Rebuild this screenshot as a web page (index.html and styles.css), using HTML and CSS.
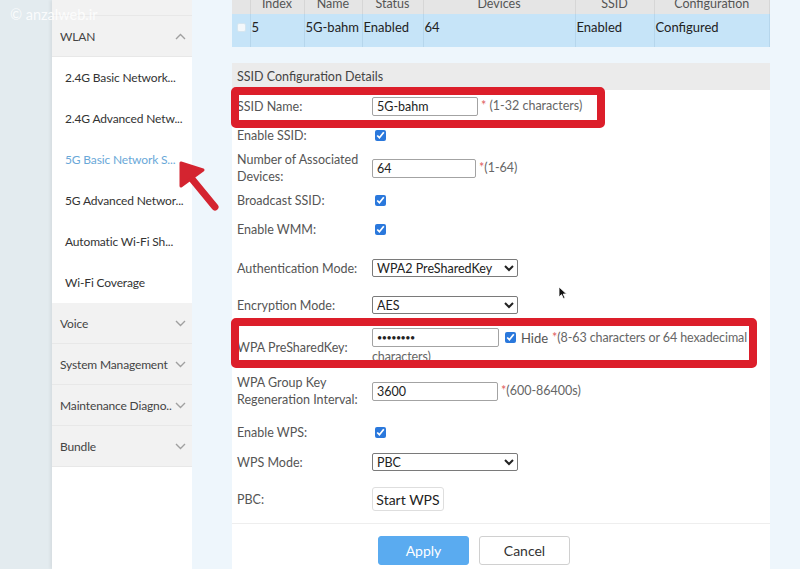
FILE: index.html
```html
<!DOCTYPE html>
<html lang="en">
  <head>
    <meta charset="UTF-8" />
    <meta name="viewport" content="width=device-width, initial-scale=1.0" />
    <title>5G Basic Network Settings</title>
    <link rel="stylesheet" href="styles.css">
  </head>
  <body>
    <div class="gutter"></div>

    <div class="sidebar">
      <ul class="menu">
        <li class="menu-head"></li>
        <li class="menu-head">
          <span>WLAN</span>
          <svg class="chevron" width="11" height="7" viewBox="0 0 11 7"><path d="M1 6 L5.5 1.5 L10 6" /></svg>
        </li>
        <li class="menu-item">2.4G Basic Network...</li>
        <li class="menu-item">2.4G Advanced Netw...</li>
        <li class="menu-item active">5G Basic Network S...</li>
        <li class="menu-item">5G Advanced Networ...</li>
        <li class="menu-item">Automatic Wi-Fi Sh...</li>
        <li class="menu-item">Wi-Fi Coverage</li>
        <li class="menu-head">
          <span>Voice</span>
          <svg class="chevron" width="11" height="7" viewBox="0 0 11 7"><path d="M1 1 L5.5 5.5 L10 1" /></svg>
        </li>
        <li class="menu-head">
          <span>System Management</span>
          <svg class="chevron" width="11" height="7" viewBox="0 0 11 7"><path d="M1 1 L5.5 5.5 L10 1" /></svg>
        </li>
        <li class="menu-head">
          <span>Maintenance Diagno..</span>
          <svg class="chevron" width="11" height="7" viewBox="0 0 11 7"><path d="M1 1 L5.5 5.5 L10 1" /></svg>
        </li>
        <li class="menu-head">
          <span>Bundle</span>
          <svg class="chevron" width="11" height="7" viewBox="0 0 11 7"><path d="M1 1 L5.5 5.5 L10 1" /></svg>
        </li>
      </ul>
    </div>

    <div class="main">
      <table class="ssid-table">
        <thead>
          <tr>
            <th class="col-check"></th>
            <th class="col-index">Index</th>
            <th class="col-name">Name</th>
            <th class="col-status">Status</th>
            <th class="col-devices">Devices</th>
            <th class="col-ssid">SSID</th>
            <th class="col-config">Configuration</th>
          </tr>
        </thead>
        <tbody>
          <tr class="selected">
            <td><span class="row-check"></span></td>
            <td>5</td>
            <td>5G-bahm</td>
            <td>Enabled</td>
            <td>64</td>
            <td>Enabled</td>
            <td>Configured</td>
          </tr>
        </tbody>
      </table>

      <div class="panel">
        <div class="panel-title">SSID Configuration Details</div>

        <div class="row h32">
          <label>SSID Name:</label>
          <div class="value">
            <input class="text w106" type="text" value="5G-bahm"><span class="hint"><span class="req">*</span> (1-32 characters)</span>
          </div>
        </div>
        <div class="row h26">
          <label>Enable SSID:</label>
          <div class="value"><input class="check" type="checkbox" checked></div>
        </div>
        <div class="row h40">
          <label>Number of Associated Devices:</label>
          <div class="value">
            <input class="text w104" type="text" value="64"><span class="hint"><span class="req">*</span>(1-64)</span>
          </div>
        </div>
        <div class="row h24">
          <label>Broadcast SSID:</label>
          <div class="value"><input class="check" type="checkbox" checked></div>
        </div>
        <div class="row h34">
          <label>Enable WMM:</label>
          <div class="value"><input class="check" type="checkbox" checked></div>
        </div>
        <div class="row h44">
          <label>Authentication Mode:</label>
          <div class="value">
            <select class="select">
              <option>WPA2 PreSharedKey</option>
            </select>
          </div>
        </div>
        <div class="row h30">
          <label>Encryption Mode:</label>
          <div class="value">
            <select class="select">
              <option>AES</option>
            </select>
          </div>
        </div>
        <div class="row h54">
          <label>WPA PreSharedKey:</label>
          <div class="value wrap">
            <input class="text w127 secret" type="password" value="12345678"><input class="check check-hide" type="checkbox" checked><span class="hide-label">Hide</span><span class="hint psk-hint"><span class="req">*</span>(8-63 characters or 64 hexadecimal characters)</span>
          </div>
        </div>
        <div class="row h34">
          <label>WPA Group Key Regeneration Interval:</label>
          <div class="value">
            <input class="text w126" type="text" value="3600"><span class="hint"><span class="req">*</span>(600-86400s)</span>
          </div>
        </div>
        <div class="row h28 gap-top">
          <label>Enable WPS:</label>
          <div class="value"><input class="check" type="checkbox" checked></div>
        </div>
        <div class="row h32">
          <label>WPS Mode:</label>
          <div class="value">
            <select class="select">
              <option>PBC</option>
            </select>
          </div>
        </div>
        <div class="row h42">
          <label>PBC:</label>
          <div class="value"><button class="btn-small">Start WPS</button></div>
        </div>

        <div class="actions">
          <button class="btn btn-primary">Apply</button>
          <button class="btn">Cancel</button>
        </div>
      </div>
    </div>

    <!-- annotations drawn on top of the screenshot -->
    <div class="watermark">© anzalweb.ir</div>
    <div class="mark mark-ssid"></div>
    <div class="mark mark-psk"></div>
    <svg class="arrow" width="56" height="62" viewBox="0 0 56 62">
      <line x1="22" y1="24" x2="45" y2="52" />
      <polygon points="11,8 11,31 33,15" />
    </svg>
    <svg class="cursor" width="10" height="14" viewBox="0 0 10 14">
      <path d="M1 1 L1 11 L3.5 8.6 L5.4 12.6 L7 11.9 L5.2 8 L8.6 8 Z" />
    </svg>
  </body>
</html>
```

FILE: styles.css
```css
* {
  box-sizing: border-box;
  margin: 0;
  padding: 0;
}

body {
  font-family: "Lato", "Open Sans", sans-serif;
  font-size: 12.5px;
  color: #444;
  background-color: #e3ebef;
  display: flex;
  height: 569px;
  overflow: hidden;
  position: relative;
}

.gutter {
  width: 52px;
  flex-shrink: 0;
}

/* left menu */
.sidebar {
  width: 140px;
  flex-shrink: 0;
  background: #fff;
  box-shadow: -2px 0 3px rgba(0, 0, 0, 0.06);
}

.menu {
  list-style: none;
  margin-top: -25px;
  font-size: 12px;
  letter-spacing: -0.15px;
}

.menu-head,
.menu-item {
  height: 41px;
  display: flex;
  align-items: center;
  white-space: nowrap;
}

.menu-head {
  background: #f2f2f2;
  border-bottom: 1px solid #e8e8e8;
  padding: 0 6px 0 8px;
  justify-content: space-between;
  color: #444;
}

.menu-item {
  padding-left: 13px;
  color: #333;
}

.menu-item.active {
  color: #6aa8d8;
}

.chevron {
  fill: none;
  stroke: #a0a0a0;
  stroke-width: 1.4;
  flex-shrink: 0;
}

/* content */
.main {
  flex: 1;
  background: #eef6fc;
  padding: 0 30px 0 40px;
  display: flex;
  flex-direction: column;
}

.ssid-table {
  width: 100%;
  margin-top: -14px;
  border-collapse: collapse;
  table-layout: fixed;
}

.ssid-table th {
  height: 28px;
  background: #e5e5e5;
  border-right: 1px solid #d6d6d6;
  font-weight: normal;
  color: #555;
  text-align: center;
  vertical-align: bottom;
  line-height: 18px;
  padding-bottom: 1px;
}

.ssid-table td {
  height: 33px;
  background: #c6e4f8;
  border-right: 1px solid #b6d6ec;
  color: #222;
  padding: 4px 0 0 1px;
  line-height: 18px;
  vertical-align: top;
  white-space: nowrap;
  font-size: 13px;
}

.col-check { width: 18px; }
.col-index { width: 54px; }
.col-name { width: 58px; }
.col-status { width: 61px; }
.col-devices { width: 152px; }
.col-ssid { width: 79px; }

.row-check {
  display: inline-block;
  width: 9px;
  height: 9px;
  margin: 5px 0 0 4px;
  background: #f4f8fb;
  border: 1px solid #d6e6f0;
  border-radius: 2px;
  vertical-align: top;
}

.panel {
  margin-top: 16px;
  background: #fff;
  flex: 1;
}

.panel-title {
  height: 27px;
  line-height: 28px;
  padding-left: 5px;
  background: #ebebeb;
  color: #444;
}

.row {
  display: flex;
  align-items: center;
  padding-left: 5px;
}

.row label {
  width: 135px;
  flex-shrink: 0;
  color: #555;
  line-height: 17px;
  padding-right: 8px;
}

.value {
  line-height: 18px;
  color: #666;
}

.value.wrap {
  width: 380px;
}

.h24 { height: 24px; }
.h26 { height: 26px; }
.h28 { height: 28px; }
.h30 { height: 30px; }
.h32 { height: 32px; }
.h34 { height: 34px; }
.h40 { height: 40px; }
.h42 { height: 42px; }
.h44 { height: 44px; }
.h54 { height: 54px; }

.gap-top {
  margin-top: 10px;
}

.text {
  height: 19px;
  border: 1px solid #a3a3a3;
  border-radius: 2px;
  padding: 0 4px;
  font-family: inherit;
  font-size: 12.5px;
  color: #222;
  vertical-align: middle;
}

.secret {
  font-size: 9px;
  letter-spacing: -0.5px;
}

.w104 { width: 104px; }
.w106 { width: 106px; }
.w126 { width: 126px; }
.w127 { width: 127px; }

.hint {
  margin-left: 3px;
  vertical-align: middle;
}

.psk-hint {
  margin-left: 4px;
  letter-spacing: -0.1px;
}

.req {
  color: #e06060;
}

.check {
  width: 11px;
  height: 11px;
  margin: 0 0 0 3px;
  accent-color: #2a78dc;
  vertical-align: middle;
}

.check-hide {
  margin-left: 6px;
}

.hide-label {
  margin-left: 5px;
  color: #555;
  font-size: 13px;
  vertical-align: middle;
}

.select {
  width: 146px;
  height: 18px;
  border: 1px solid #7a7a7a;
  border-radius: 2px;
  font-family: inherit;
  font-size: 12.5px;
  color: #222;
  background: #fff;
  vertical-align: middle;
}

.btn-small {
  width: 72px;
  height: 24px;
  background: #fff;
  border: 1px solid #dedede;
  border-radius: 3px;
  font-family: inherit;
  font-size: 14px;
  color: #222;
}

.actions {
  margin-top: 3px;
  border-top: 1px solid #eeeeee;
  padding: 12px 0 0 146px;
  display: flex;
  gap: 10px;
}

.btn {
  width: 91px;
  height: 29px;
  border: 1px solid #d0d0d0;
  border-radius: 3px;
  background: #fff;
  font-family: inherit;
  font-size: 14px;
  color: #333;
}

.btn-primary {
  background: #5aabf0;
  border-color: #5aabf0;
  color: #fff;
}

/* overlays */
.watermark {
  position: absolute;
  left: 10px;
  top: 6px;
  color: rgba(255, 255, 255, 0.85);
  font-size: 14.5px;
}

.mark {
  position: absolute;
  border: 8px solid #dc1e2a;
  border-radius: 5px;
}

.mark-ssid {
  left: 231px;
  top: 87px;
  width: 374px;
  height: 41px;
}

.mark-psk {
  left: 231px;
  top: 318px;
  width: 526px;
  height: 50px;
}

.arrow {
  position: absolute;
  left: 170px;
  top: 155px;
}

.arrow line {
  stroke: #d42430;
  stroke-width: 7;
  stroke-linecap: round;
}

.arrow polygon {
  fill: #d42430;
  stroke: #d42430;
  stroke-width: 3;
  stroke-linejoin: round;
}

.cursor {
  position: absolute;
  left: 558px;
  top: 286px;
}

.cursor path {
  fill: #111;
  stroke: #fff;
  stroke-width: 0.8;
}
```
